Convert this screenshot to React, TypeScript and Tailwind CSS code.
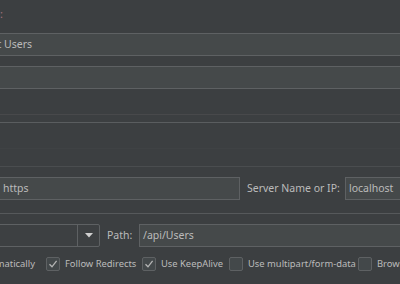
import React from "react";

function Field({ className = "", children }: { className?: string; children?: React.ReactNode }) {
  return (
    <div
      className={`flex h-[23px] shrink-0 items-center border border-[#5e6163] bg-[#45494a] text-[10.5px] text-[#bbbbbb] ${className}`}
    >
      {children}
    </div>
  );
}

function Check({ checked }: { checked?: boolean }) {
  return (
    <span className="flex h-[14px] w-[14px] shrink-0 items-center justify-center rounded-[2px] border border-[#5e6163] bg-[#43484a]">
      {checked ? (
        <svg width="10" height="10" viewBox="0 0 10 10" fill="none">
          <path d="M1.5 5.2 L4 7.8 L8.6 1.8" stroke="#b5b5b5" strokeWidth="1.3" />
        </svg>
      ) : null}
    </span>
  );
}

export default function App() {
  return (
    <div className="h-[284px] w-[400px] overflow-hidden bg-[#3c3f41] font-['Noto_Sans',sans-serif] text-[#bbbbbb]">
      <div className="ml-[-30px] w-[460px]">
        {/* title */}
        <div className="flex h-[33px] items-start pt-[8px]">
          <span className="ml-[-1px] text-[11px] leading-[12px] text-[#a3727c]">Name:</span>
        </div>

        <Field>
          <span className="ml-[13px] whitespace-nowrap">Get Users</span>
        </Field>
        <Field className="mt-[10px]" />

        {/* tab strip / titled borders */}
        <div className="mt-[25px] h-px bg-[#48494b]" />
        <div className="mt-[7px] h-px bg-[#5a5d5f]" />
        <div className="mt-[25px] h-px bg-[#3f4244]" />
        <div className="mt-[17px] h-px bg-[#4a4d4f]" />

        {/* web server */}
        <div className="mt-[10px] flex h-[23px] items-center">
          <Field className="w-[270px]">
            <span className="ml-[32px]">https</span>
          </Field>
          <span className="ml-[7px] w-[98px] shrink-0 whitespace-nowrap text-[10.5px]">Server Name or IP:</span>
          <Field className="flex-1">
            <span className="ml-[3px]">localhost</span>
          </Field>
        </div>

        <div className="mt-[13px] h-px bg-[#56595b]" />

        {/* method + path */}
        <div className="mt-[10px] flex h-[23px] items-center">
          <div className="flex h-[23px] w-[130px] shrink-0 items-center justify-end rounded-[2px] border border-[#5e6163] bg-[#3d4042]">
            <div className="flex h-full w-[22px] items-center justify-center border-l border-[#5e6163]">
              <svg width="8" height="5" viewBox="0 0 8 5">
                <path d="M0 0 H8 L4 4.5 Z" fill="#d0d0d0" />
              </svg>
            </div>
          </div>
          <span className="ml-[7px] w-[32px] shrink-0 text-[10.5px]">Path:</span>
          <Field className="flex-1">
            <span className="ml-[3px]">/api/Users</span>
          </Field>
        </div>

        {/* options */}
        <div className="mt-[9px] flex h-[16px] items-center whitespace-nowrap text-[9.4px]">
          <span className="ml-[-60px] w-[125px] shrink-0 text-right">Redirect Automatically</span>
          <span className="ml-[11px] shrink-0">
            <Check checked />
          </span>
          <span className="ml-[5px] w-[77px] shrink-0">Follow Redirects</span>
          <Check checked />
          <span className="ml-[5px] w-[68px] shrink-0">Use KeepAlive</span>
          <Check />
          <span className="ml-[5px] w-[110px] shrink-0">Use multipart/form-data</span>
          <Check />
          <span className="ml-[5px] shrink-0">Browser-compatible headers</span>
        </div>
      </div>
    </div>
  );
}
